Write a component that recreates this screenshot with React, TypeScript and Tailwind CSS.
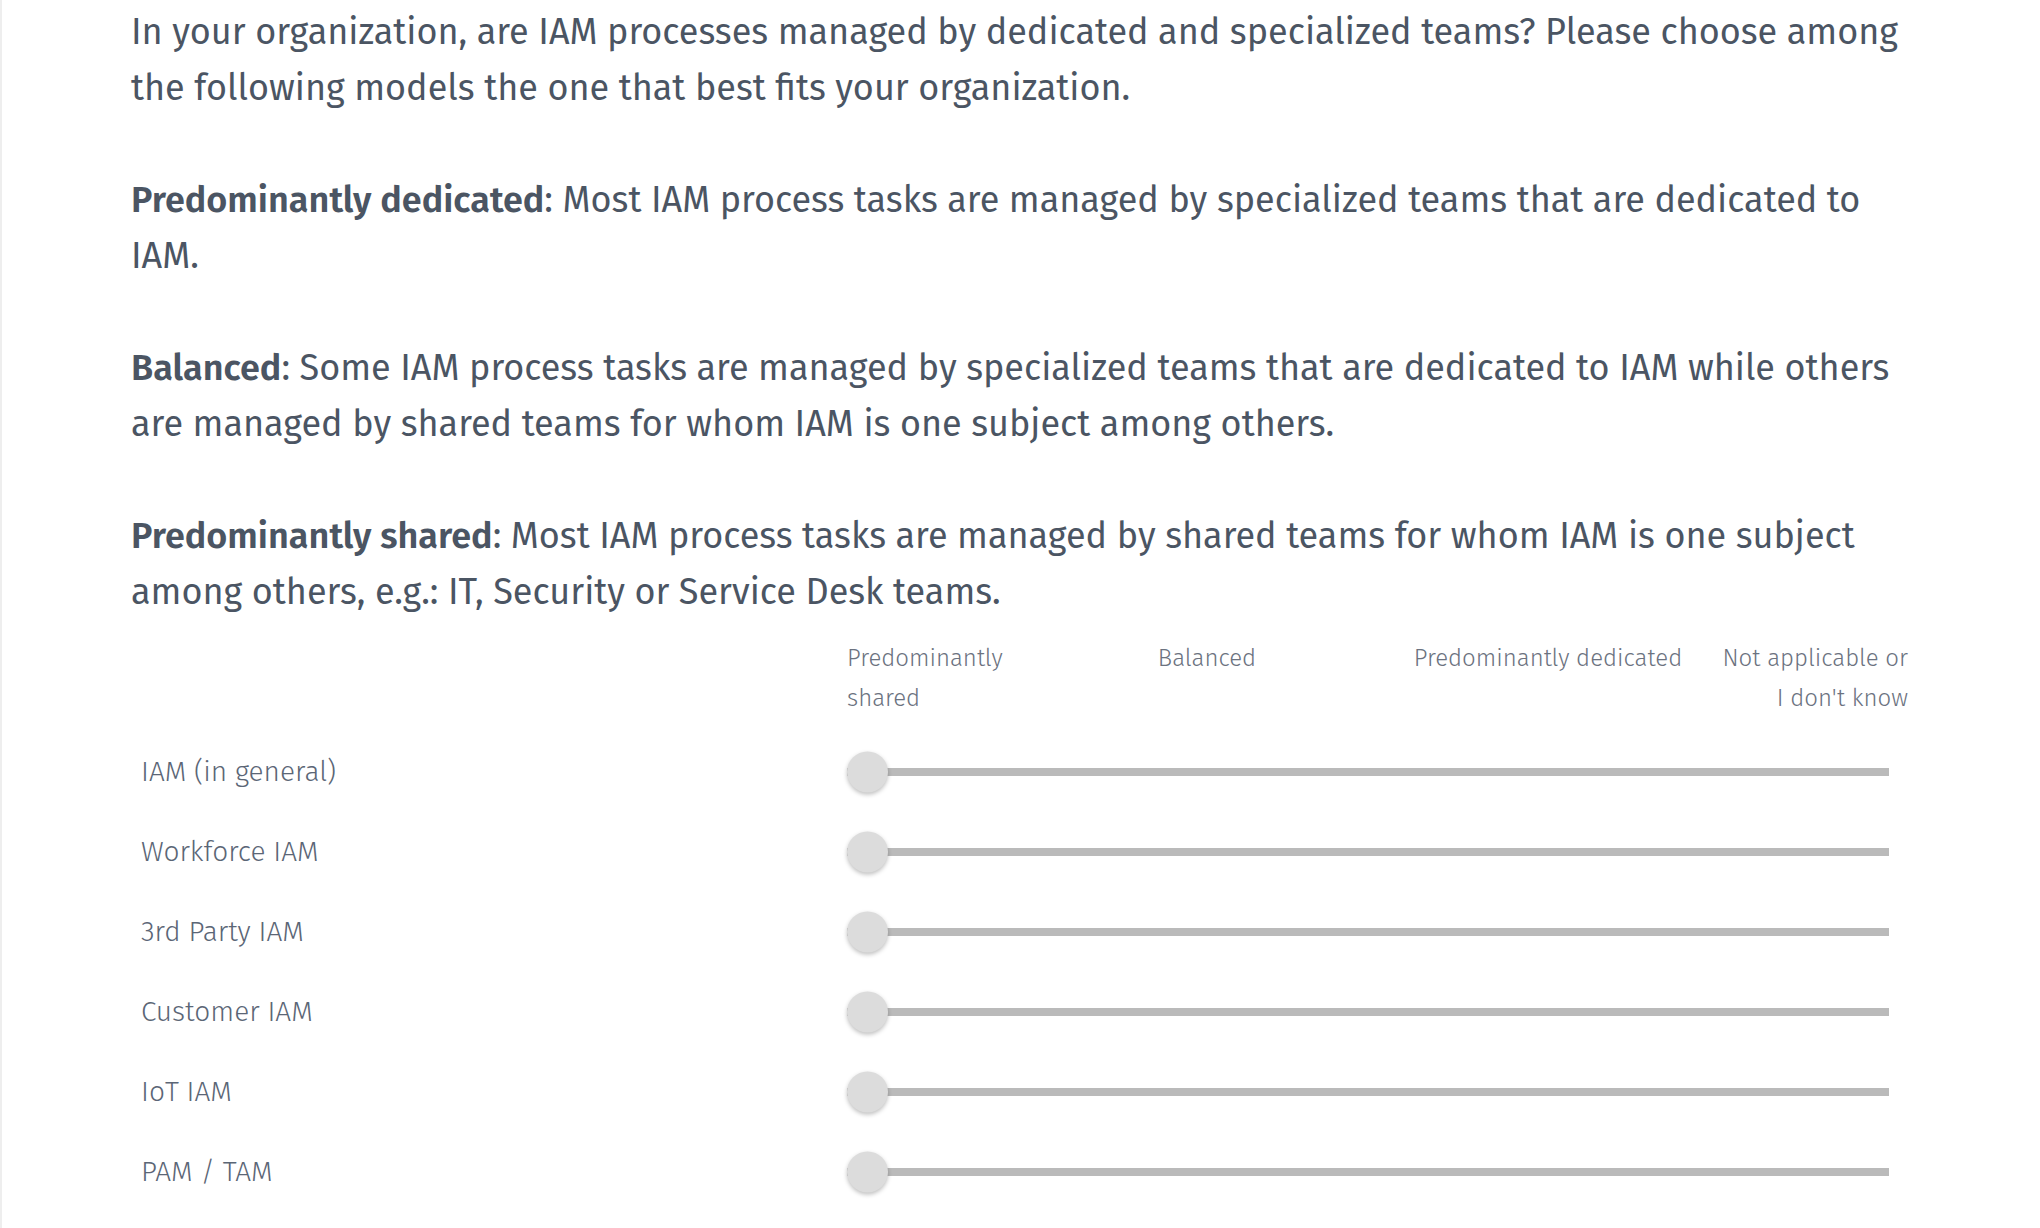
import React from "react";

const rows = ["IAM (in general)", "Workforce IAM", "3rd Party IAM", "Customer IAM", "IoT IAM", "PAM / TAM"];

function Slider() {
  return (
    <div className="relative flex items-center h-full">
      <div className="h-2 w-[1042px] bg-[#bababa]" />
      <div className="absolute left-0 top-1/2 -translate-y-1/2 w-[41px] h-[41px] rounded-full bg-[#dcdcdc] shadow-[0_2px_4px_rgba(0,0,0,0.25)]" />
    </div>
  );
}

export default function App() {
  return (
    <div
      className="min-h-screen bg-white border-l-2 border-[#eeeeee] text-[#4b5563]"
      style={{ fontFamily: '"Fira Sans", Lato, "Open Sans", sans-serif' }}
    >
      <div className="pl-[129px] pr-[132px] pt-[4px]">
        {/* question text */}
        <div className="text-[36px] leading-[56px]">
          <p className="mb-[56px]">
            In your organization, are IAM processes managed by dedicated and specialized teams? Please choose among
            the following models the one that best fits your organization.
          </p>
          <p className="mb-[56px]">
            <span className="font-semibold">Predominantly dedicated</span>: Most IAM process tasks are managed by
            specialized teams that are dedicated to IAM.
          </p>
          <p className="mb-[56px]">
            <span className="font-semibold">Balanced</span>: Some IAM process tasks are managed by specialized teams
            that are dedicated to IAM while others are managed by shared teams for whom IAM is one subject among
            others.
          </p>
          <p>
            <span className="font-semibold">Predominantly shared</span>: Most IAM process tasks are managed by shared
            teams for whom IAM is one subject among others, e.g.: IT, Security or Service Desk teams.
          </p>
        </div>

        {/* slider matrix */}
        <div className="grid grid-cols-[716px_1fr] mt-[18px]">
          <div />
          <div className="relative h-[94px] text-[24px] leading-[40px] font-light text-[#6b7280]">
            <div className="absolute left-0 top-0">
              Predominantly
              <br />
              shared
            </div>
            <div className="absolute left-[360px] top-0 -translate-x-1/2 whitespace-nowrap">Balanced</div>
            <div className="absolute left-[701px] top-0 -translate-x-1/2 whitespace-nowrap">Predominantly dedicated</div>
            <div className="absolute right-0 top-0 text-right whitespace-nowrap">
              Not applicable or
              <br />
              I don't know
            </div>
          </div>

          {rows.map((r) => (
            <React.Fragment key={r}>
              <div className="h-[80px] flex items-center pl-[10px] text-[28px] font-light text-[#5b6676]">{r}</div>
              <div className="h-[80px]">
                <Slider />
              </div>
            </React.Fragment>
          ))}
        </div>
      </div>
    </div>
  );
}
